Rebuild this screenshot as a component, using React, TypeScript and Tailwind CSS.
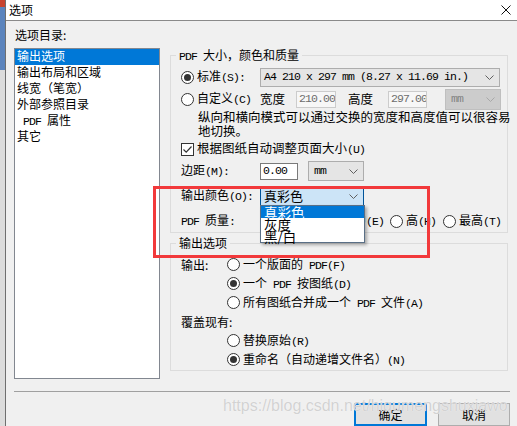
const MONO = "font-['Liberation_Mono',monospace] text-[11.5px] tracking-[-0.9px] whitespace-pre";

// ascii runs get the narrow mono face, the rest stays in the CJK font
function T({ s }: { s: string }) {
  const parts = s.split(/([\x20-\x7e]+)/).filter((p) => p !== "");
  return (
    <>
      {parts.map((p, i) =>
        /^[\x20-\x7e]+$/.test(p) ? (
          <span key={i} className={MONO}>
            {p}
          </span>
        ) : (
          <span key={i}>{p}</span>
        )
      )}
    </>
  );
}

function Radio({ on = false }: { on?: boolean }) {
  return (
    <span className="flex h-[13px] w-[13px] shrink-0 items-center justify-center rounded-full border border-[#333] bg-white">
      {on && <span className="h-[7px] w-[7px] rounded-full bg-[#333]" />}
    </span>
  );
}

function Chevron({ c = "#606060" }: { c?: string }) {
  return (
    <svg width="9" height="5" viewBox="0 0 9 5" className="shrink-0">
      <polyline points="0.5,0.5 4.5,4.5 8.5,0.5" fill="none" stroke={c} />
    </svg>
  );
}

function Group({ title, children, className }: { title: string; children: React.ReactNode; className?: string }) {
  return (
    <div className={`relative pt-[7px] ${className ?? ""}`}>
      <span className="absolute left-[6px] top-0 bg-[#f0f0f0] px-[3px] leading-[14px]">
        <T s={title} />
      </span>
      <div className="border border-[#dcdcdc]">{children}</div>
    </div>
  );
}

export default function App() {
  const items = ["输出选项", "输出布局和区域", "线宽（笔宽）", "外部参照目录", " PDF 属性", "其它"];

  return (
    <div className="relative flex h-[426px] w-[517px] overflow-hidden bg-[#f0f0f0] font-['Noto_Sans_CJK_SC',sans-serif] text-[12px] text-black">
      <div className="flex w-[7px] flex-col">
        <div className="h-[7px] bg-[#c8442f]" />
        <div className="h-[63px] bg-[#5b84bd]" />
        <div className="flex-1 bg-[#dcdcdc]" />
      </div>

      <div className="flex flex-1 flex-col border-l border-[#6f6f6f]">
        {/* title bar */}
        <div className="flex h-[24px] items-center justify-between border-b border-[#8a8a8a] bg-white pl-[3px] pr-[6px]">
          <span className="leading-[14px]">选项</span>
          <svg width="10" height="10" viewBox="0 0 10 10">
            <path d="M0.5 0.5 L9.5 9.5 M9.5 0.5 L0.5 9.5" stroke="#111" strokeWidth="1" />
          </svg>
        </div>

        <div className="flex flex-col pl-[8px] pr-[7px] pt-[6px]">
          <div className="ml-[1px] leading-[16px]">选项目录:</div>

          <div className="mt-[5px] flex">
            <div className="h-[331px] w-[146px] shrink-0 border border-[#828790] bg-white">
              {items.map((it, i) => (
                <div
                  key={it}
                  className={`h-[16px] pl-[2px] leading-[14px] ${i === 0 ? "bg-[#0078d7] text-white" : ""}`}
                >
                  <T s={it} />
                </div>
              ))}
            </div>

            <div className="ml-[10px] flex w-[338px] flex-col">
              <Group title="PDF 大小，颜色和质量">
                <div className="flex flex-col pl-[10px] pt-[10px]">
                  <div className="flex h-[22px] items-center">
                    <div className="flex w-[79px] items-center">
                      <Radio on />
                      <span className="ml-[3px]">
                        <T s="标准(S):" />
                      </span>
                    </div>
                    <div className="flex h-[19px] w-[240px] items-center justify-between border border-[#adadad] bg-[#e5e5e5] pl-[3px] pr-[5px]">
                      <span className={MONO}>A4 210 x 297 mm (8.27 x 11.69 in.)</span>
                      <Chevron />
                    </div>
                  </div>

                  <div className="flex h-[22px] items-center">
                    <div className="flex w-[79px] items-center">
                      <Radio />
                      <span className="ml-[3px]">
                        <T s="自定义(C)" />
                      </span>
                    </div>
                    <span className="w-[36px] text-[12.5px]">宽度</span>
                    <div className="flex h-[17px] w-[40px] items-center overflow-hidden border border-[#cccccc] bg-[#f7f7f7] pl-[2px] text-[#6d6d6d]">
                      <span className={MONO}>210.00</span>
                    </div>
                    <span className="ml-[12px] w-[40px] text-[12.5px]">高度</span>
                    <div className="flex h-[17px] w-[39px] items-center overflow-hidden border border-[#cccccc] bg-[#f7f7f7] pl-[2px] text-[#6d6d6d]">
                      <span className={MONO}>297.00</span>
                    </div>
                    <div className="ml-[18px] flex h-[21px] w-[56px] items-center justify-between border border-[#bfbfbf] bg-[#cccccc] pl-[5px] pr-[5px] text-[#838383]">
                      <span className={MONO}>mm</span>
                      <Chevron c="#a8a8a8" />
                    </div>
                  </div>

                  <div className="pl-[17px] text-[12.5px] leading-[14px] whitespace-nowrap">
                    <div>纵向和横向模式可以通过交换的宽度和高度值可以很容易</div>
                    <div>地切换。</div>
                  </div>

                  <div className="flex h-[22px] items-center">
                    <span className="flex h-[13px] w-[13px] items-center justify-center border border-[#333] bg-white">
                      <svg width="11" height="11" viewBox="0 0 11 11">
                        <path d="M1.5 5.5 L4.2 8.2 L9.5 2.5" fill="none" stroke="#333" strokeWidth="1.2" />
                      </svg>
                    </span>
                    <span className="ml-[3px] text-[12.5px]">
                      <T s="根据图纸自动调整页面大小(U)" />
                    </span>
                  </div>

                  <div className="flex h-[22px] items-center">
                    <span className="w-[79px]">
                      <T s="边距(M):" />
                    </span>
                    <div className="flex h-[17px] w-[38px] items-center border border-[#7a7a7a] bg-white pl-[2px]">
                      <span className={MONO}>0.00</span>
                    </div>
                    <div className="ml-[10px] flex h-[20px] w-[56px] items-center justify-between border border-[#adadad] bg-[#e5e5e5] pl-[5px] pr-[5px]">
                      <span className={MONO}>mm</span>
                      <Chevron />
                    </div>
                  </div>

                  <div className="mt-[3px] flex h-[22px] items-center">
                    <span className="w-[79px]">
                      <T s="输出颜色(O):" />
                    </span>
                    <div className="relative flex h-[20px] w-[104px] items-center justify-between border border-[#005499] bg-[#cce4f7] pl-[3px] pr-[5px] text-[13px]">
                      <span className="leading-[14px]">真彩色</span>
                      <Chevron />
                      <div className="absolute left-[-1px] top-[18px] z-10 w-[105px] border border-[#5a6f86] bg-white text-[13.5px] shadow-[2px_2px_3px_rgba(0,0,0,0.3)]">
                        <div className="h-[12px] bg-[#0078d7] pl-[3px] leading-[12px] text-white">真彩色</div>
                        <div className="h-[12px] pl-[3px] leading-[12px]">灰度</div>
                        <div className="h-[12px] pl-[3px] leading-[12px]">黑/白</div>
                      </div>
                    </div>
                  </div>

                  <div className="mt-[3px] flex h-[22px] items-center">
                    <span className="w-[79px]">
                      <T s="PDF 质量:" />
                    </span>
                    <Radio />
                    <span className="ml-[3px]">
                      <T s="低(W)" />
                    </span>
                    <span className="ml-[32px]">
                      <Radio />
                    </span>
                    <span className="ml-[3px]">
                      <T s="中(E)" />
                    </span>
                    <span className="ml-[6px]">
                      <Radio />
                    </span>
                    <span className="ml-[3px]">
                      <T s="高(H)" />
                    </span>
                    <span className="ml-[7px]">
                      <Radio />
                    </span>
                    <span className="ml-[3px]">
                      <T s="最高(T)" />
                    </span>
                  </div>
                </div>
              </Group>

              <Group title="输出选项" className="mt-[3px]">
                <div className="grid grid-cols-[46px_1fr] pb-[1px] pl-[10px] pt-[11px]">
                  <div className="flex h-[19px] items-center">输出:</div>
                  <div className="flex h-[19px] items-center">
                    <Radio />
                    <span className="ml-[3px]">
                      <T s="一个版面的 PDF(F)" />
                    </span>
                  </div>
                  <div className="col-start-2 flex h-[19px] items-center">
                    <Radio on />
                    <span className="ml-[3px]">
                      <T s="一个 PDF 按图纸(D)" />
                    </span>
                  </div>
                  <div className="col-start-2 flex h-[19px] items-center">
                    <Radio />
                    <span className="ml-[3px]">
                      <T s="所有图纸合并成一个 PDF 文件(A)" />
                    </span>
                  </div>
                  <div className="col-span-2 flex h-[19px] items-center">覆盖现有:</div>
                  <div className="col-start-2 flex h-[19px] items-center">
                    <Radio />
                    <span className="ml-[3px]">
                      <T s="替换原始(R)" />
                    </span>
                  </div>
                  <div className="col-start-2 flex h-[19px] items-center">
                    <Radio on />
                    <span className="ml-[3px]">
                      <T s="重命名（自动递增文件名）(N)" />
                    </span>
                  </div>
                </div>
              </Group>
            </div>
          </div>

          <div className="mt-[12px] h-[1px] w-[496px] bg-[#a0a0a0]" />

          <div className="mt-[11px] flex justify-end gap-[11px]">
            <div className="flex h-[23px] w-[73px] items-center justify-center border-2 border-[#0078d7] bg-[#e1e1e1]">确定</div>
            <div className="flex h-[23px] w-[72px] items-center justify-center border border-[#adadad] bg-[#e1e1e1]">取消</div>
          </div>
        </div>
      </div>

      {/* annotation + watermark on top of the screenshot */}
      <div className="pointer-events-none absolute left-[153px] top-[186px] z-20 h-[72px] w-[277px] border-[3px] border-[#f2393b]" />
      <div className="pointer-events-none absolute left-[223px] top-[396px] z-20 font-['Liberation_Sans',sans-serif] text-[16px] leading-[20px] text-[#d2d2d2] [text-shadow:0_0_1px_#ffffff]">
        https://blog.csdn.net/hiqumengshuxiawo
      </div>
    </div>
  );
}
